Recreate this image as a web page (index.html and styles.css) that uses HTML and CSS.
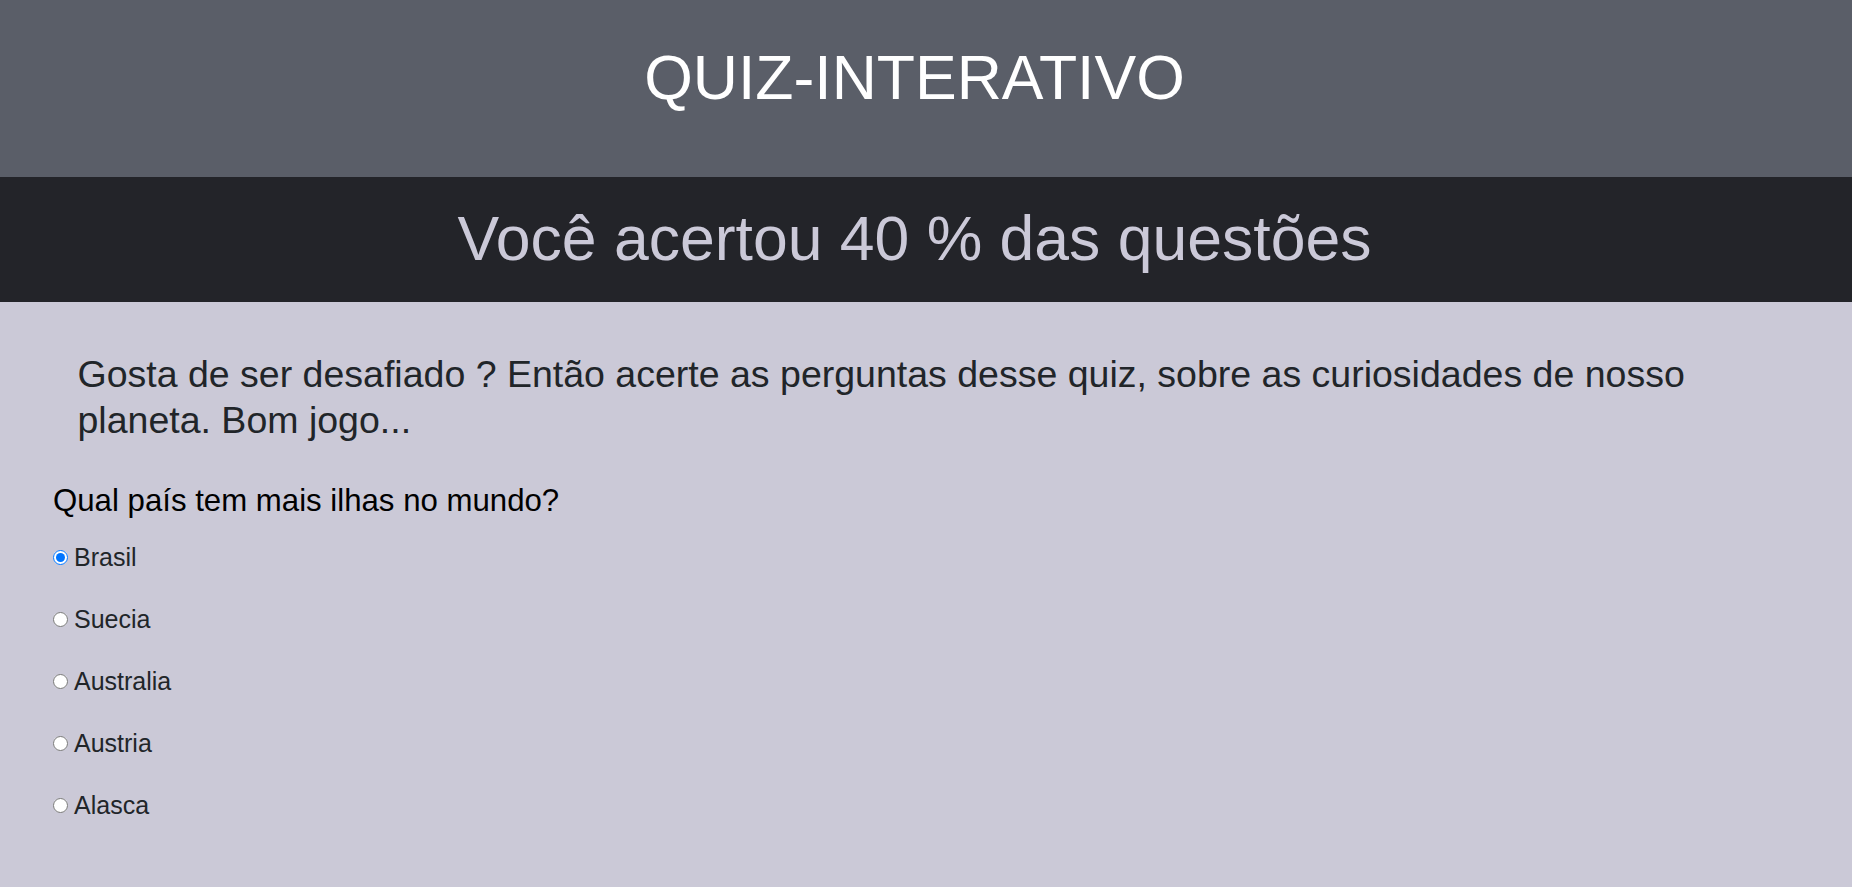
FILE: index.html
```html
<!DOCTYPE html>
<html lang="pt-BR">
<head>
<meta charset="utf-8">
<title>Quiz Interativo</title>
<link rel="stylesheet" href="styles.css">
</head>
<body>
<header class="top">
  <h1 class="title">QUIZ-INTERATIVO</h1>
</header>
<section class="score">
  <h2 class="score-text">Você acertou 40 % das questões</h2>
</section>
<main class="content">
  <p class="intro">Gosta de ser desafiado ? Então acerte as perguntas desse quiz, sobre as curiosidades de nosso planeta. Bom jogo...</p>
  <form class="quiz">
    <p class="question">Qual país tem mais ilhas no mundo?</p>
    <label class="option"><input class="radio" type="radio" name="q1" checked>Brasil</label>
    <label class="option"><input class="radio" type="radio" name="q1">Suecia</label>
    <label class="option"><input class="radio" type="radio" name="q1">Australia</label>
    <label class="option"><input class="radio" type="radio" name="q1">Austria</label>
    <label class="option"><input class="radio" type="radio" name="q1">Alasca</label>
  </form>
</main>
</body>
</html>
```
FILE: styles.css
```css
html, body {
  margin: 0;
  padding: 0;
}
body {
  font-family: "Liberation Sans", Arial, sans-serif;
  background: #cbc9d7;
  color: #212529;
  min-height: 887px;
}
.top {
  background: #5a5e68;
  padding: 40px 23px 63px 0;
  text-align: center;
}
.title {
  margin: 0;
  font-size: 62.5px;
  font-weight: 400;
  line-height: 74px;
  color: #ffffff;
}
.score {
  background: #232429;
  padding: 29px 23px 32px 0;
  text-align: center;
}
.score-text {
  margin: 0;
  font-size: 62.5px;
  font-weight: 400;
  line-height: 64px;
  color: #cbc9d8;
}
.content {
  padding: 49px 0 40px 0;
}
.intro {
  margin: 0 78px 0 77.5px;
  font-size: 37.5px;
  line-height: 46px;
  color: #212529;
}
.quiz {
  display: flex;
  flex-direction: column;
  align-items: flex-start;
  margin: 39.5px 0 0 53px;
}
.question {
  margin: 0 0 24.5px 0;
  font-size: 31.2px;
  line-height: 36px;
  color: #000000;
}
.option {
  display: flex;
  align-items: center;
  font-size: 25px;
  line-height: 28px;
  margin: 0 0 34px 0;
  color: #212529;
}
.radio {
  width: 15px;
  height: 15px;
  margin: 0 6px 0 0;
}
```
